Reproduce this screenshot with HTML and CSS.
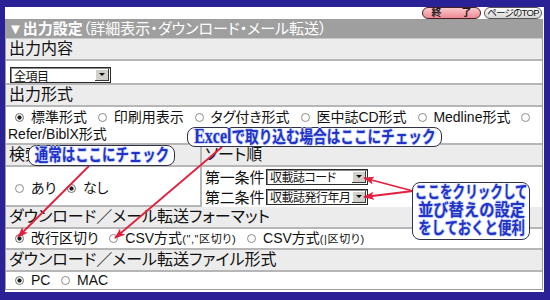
FILE: index.html
```html
<!DOCTYPE html>
<html lang="ja">
<head>
<meta charset="utf-8">
<title>出力設定</title>
<link rel="stylesheet" href="styles.css">
</head>
<body>
<div class="panel">
  <div class="topbar">
    <span class="btn btn-end">終　　了</span>
    <span class="btn btn-top">ページのTOP</span>
  </div>
  <div class="box">
    <div class="head"><b>▼出力設定</b>（詳細表示・ダウンロード・メール転送）</div>
    <div class="lbl">出力内容</div>
    <div class="row row-sel"><span class="sel sel-all">全項目<i class="arr"></i></span></div>
    <div class="lbl">出力形式</div>
    <div class="row row-fmt">
      <div class="line"><input class="rd" type="radio" name="fmt" checked> 標準形式 <input class="rd" type="radio" name="fmt"> 印刷用表示 <input class="rd" type="radio" name="fmt"> タグ付き形式 <input class="rd" type="radio" name="fmt"> 医中誌CD形式 <input class="rd" type="radio" name="fmt"> Medline形式 <input class="rd" type="radio" name="fmt"></div>
      <div class="line">Refer/BiblX形式</div>
    </div>
    <div class="split">
      <div class="lbl lbl-l">検索語ハイライト</div>
      <div class="lbl">ソート順</div>
      <div class="row row-l"><span class="opts"><input class="rd" type="radio" name="hl"> あり <input class="rd" type="radio" name="hl" checked> なし</span></div>
      <div class="row row-sort">
        <div class="sline"><span class="cond">第一条件</span><span class="sel">収載誌コード<i class="arr"></i></span></div>
        <div class="sline"><span class="cond">第二条件</span><span class="sel">収載誌発行年月<i class="arr"></i></span></div>
      </div>
    </div>
    <div class="lbl">ダウンロード／メール転送フォーマット</div>
    <div class="row row-dl"><input class="rd" type="radio" name="dl" checked> 改行区切り <input class="rd" type="radio" name="dl"> CSV方式<small>(","区切り)</small> <input class="rd" type="radio" name="dl"> CSV方式<small>(|区切り)</small></div>
    <div class="lbl">ダウンロード／メール転送ファイル形式</div>
    <div class="row row-pc"><input class="rd" type="radio" name="os" checked> PC <input class="rd" type="radio" name="os"> MAC</div>
  </div>
</div>

<svg class="arrows" width="550" height="300" viewBox="0 0 550 300">
  <defs>
    <marker id="ah" viewBox="0 0 11 8" refX="10" refY="4" markerWidth="11" markerHeight="8" markerUnits="userSpaceOnUse" orient="auto">
      <path d="M0 0 L11 4 L0 8 L2.5 4 Z" fill="#e2203e"/>
    </marker>
  </defs>
  <g stroke="#e2203e" stroke-width="1.8" fill="none">
    <line x1="89" y1="166" x2="18" y2="237" marker-end="url(#ah)"/>
    <line x1="222" y1="147" x2="115" y2="238" marker-end="url(#ah)"/>
    <line x1="413" y1="191" x2="364" y2="178" marker-end="url(#ah)"/>
    <line x1="413" y1="191" x2="364" y2="197" marker-end="url(#ah)"/>
  </g>
</svg>

<div class="callout c1"><span class="t">通常はここにチェック</span></div>
<div class="callout c2"><span class="t"><span class="en">Excel</span>で取り込む場合はここにチェック</span></div>
<div class="callout c3"><span class="t l1">ここをクリックして</span><span class="t l2">並び替えの設定</span><span class="t l3">をしておくと便利</span></div>
</body>
</html>
```

FILE: styles.css
```css
* { box-sizing: border-box; }
html, body { margin: 0; }
body {
  position: relative;
  width: 550px;
  height: 300px;
  overflow: hidden;
  background: #2a2197;
  padding: 7px 6px 8px 5px;
  font-family: "Liberation Sans", "Noto Sans CJK JP", sans-serif;
  font-feature-settings: "palt";
  color: #111;
}

.panel {
  height: 285px;
  background: #fff;
  padding: 0 1px 2px 0;
  display: flex;
  flex-direction: column;
}

.topbar {
  height: 12px;
  display: flex;
  justify-content: flex-end;
  align-items: flex-start;
  gap: 3px;
  padding-right: 1px;
}
.btn {
  height: 12px;
  border-radius: 6px;
  border: 1px solid #3a3a3a;
  font-size: 10px;
  line-height: 10px;
  display: flex;
  align-items: center;
  justify-content: center;
  white-space: nowrap;
}
.btn-end {
  width: 59px;
  background: linear-gradient(#fbc9cd, #ee8a94);
  font-weight: bold;
  color: #1a1a1a;
  font-feature-settings: normal;
  border-color: #4a2020;
}
.btn-top {
  width: 58px;
  background: linear-gradient(#ffffff, #d6d6d6);
  color: #111;
  font-size: 9.5px;
  letter-spacing: -0.7px;
  padding: 0;
  border-color: #555;
}

.box {
  flex: 1;
  border: 1px solid #9c9c9c;
  display: flex;
  flex-direction: column;
}

.head {
  height: 19px;
  background: #9f9f9f;
  border-bottom: 1px solid #c9c9c9;
  color: #fff;
  font-size: 15px;
  line-height: 18px;
  padding-left: 2px;
  white-space: nowrap;
}

.lbl {
  height: 22px;
  background: #ececec;
  border-bottom: 2px solid #b6b6b6;
  font-size: 16px;
  line-height: 20px;
  padding-left: 3px;
  white-space: nowrap;
  overflow: hidden;
}

.row {
  background: #fff;
  border-bottom: 2px solid #b6b6b6;
  font-size: 14px;
  white-space: nowrap;
}
.row:last-child { border-bottom: 0; }

.rd {
  -webkit-appearance: none;
  appearance: none;
  display: inline-block;
  width: 9px;
  height: 9px;
  margin: 0 3px 0 7px;
  border: 1px solid #8c8c8c;
  border-radius: 50%;
  background: #fff;
  vertical-align: 0;
}
.rd:checked {
  background: radial-gradient(circle, #1e1e1e 0 1.8px, #fff 2.4px);
  border-color: #6e6e6e;
}

/* select-like boxes */
.sel {
  position: relative;
  display: inline-flex;
  align-items: center;
  width: 102px;
  height: 16px;
  border: 1px solid #2a2a2a;
  box-shadow: inset 1px 1px 0 #8a8a8a;
  background: #fff;
  font-size: 12px;
  letter-spacing: -0.5px;
  padding-left: 3px;
  color: #111;
}
.arr {
  position: absolute;
  right: 1px;
  top: 1px;
  width: 14px;
  height: 12px;
  background: #d2d0cb;
  border-right: 1px solid #3a3a3a;
  border-bottom: 1px solid #3a3a3a;
  box-shadow: inset 1px 1px 0 #fff;
}
.arr::after {
  content: "";
  position: absolute;
  left: 4px;
  top: 4px;
  border-left: 3px solid transparent;
  border-right: 3px solid transparent;
  border-top: 3px solid #111;
}

.row-sel {
  height: 24px;
  padding: 6px 0 0 4px;
}
.sel-all { width: 101px; }

.row-fmt {
  height: 38px;
  padding: 2px 0 0 2px;
  line-height: 17px;
  overflow: hidden;
}
.row-fmt .line { white-space: nowrap; }

.split {
  display: grid;
  grid-template-columns: 196px 1fr;
}
.split .lbl-l,
.split .row-l { border-right: 2px solid #b6b6b6; }

.row-l {
  height: 40px;
  display: flex;
  align-items: center;
  padding-left: 2px;
  padding-top: 2px;
}
.row-sort {
  height: 40px;
  padding: 1px 0 0 3px;
  display: flex;
  flex-direction: column;
  gap: 3px;
}
.sline {
  height: 17px;
  display: flex;
  align-items: center;
  font-size: 15px;
}
.cond {
  width: 61px;
  letter-spacing: -0.2px;
}

.row-dl {
  height: 21px;
  line-height: 19px;
  padding-left: 2px;
}
.row-dl small {
  font-size: 11px;
  letter-spacing: 0.6px;
}
.row-pc {
  height: 17px;
  line-height: 17px;
  padding-left: 2px;
}

/* annotation layer */
.arrows {
  position: absolute;
  left: 0;
  top: 0;
  z-index: 2;
  pointer-events: none;
}
.callout {
  position: absolute;
  z-index: 3;
  display: flex;
  align-items: center;
  justify-content: center;
  background: #fff;
  border: 1.5px solid #2f3247;
  border-radius: 8px;
  color: #2232c6;
  font-weight: bold;
  font-size: 17px;
  font-feature-settings: normal;
  white-space: nowrap;
  text-shadow: 1px 0 0 #c9d6ff, -1px 0 0 #c9d6ff, 0 1px 0 #c9d6ff, 0 -1px 0 #c9d6ff;
}
.callout .t {
  display: inline-block;
  flex: none;
  transform-origin: center;
}
.c1 {
  left: 28px;
  top: 145px;
  width: 147px;
  height: 21px;
  line-height: 18px;
}
.c1 .t { transform: scaleX(0.79); }
.c2 {
  left: 187px;
  top: 127px;
  width: 255px;
  height: 20px;
  line-height: 17px;
}
.c2 .t { transform: scaleX(0.8); }
.c2 .en {
  font-family: "Liberation Serif", serif;
  font-size: 20px;
}
.c3 {
  left: 412px;
  top: 182px;
  width: 118px;
  height: 58px;
  flex-direction: column;
  line-height: 18px;
}
.c3 .l1 { transform: scaleX(0.74); }
.c3 .l2 { transform: scaleX(0.9); }
.c3 .l3 { transform: scaleX(0.79); }
```
